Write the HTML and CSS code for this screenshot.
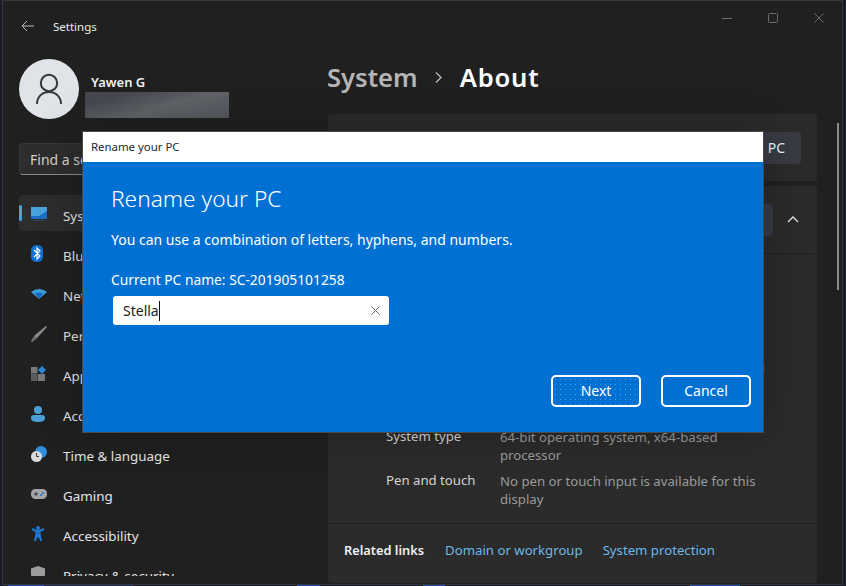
FILE: index.html
```html
<!DOCTYPE html>
<html lang="en">
<head>
    <title>Settings</title>
    <meta charset="UTF-8">
    <meta name="viewport" content="width=device-width, initial-scale=1.0">
    <link rel="stylesheet" href="styles.css">
</head>
<body>
    <div class="window">
        <aside class="sidebar">
            <div class="titlebar">
                <svg class="back" width="13" height="12" viewBox="0 0 13 12"><path d="M6 1 1 6l5 5M1 6h12" fill="none" stroke="#b9bbbd" stroke-width="1"/></svg>
                <span>Settings</span>
            </div>
            <div class="user">
                <div class="avatar">
                    <svg width="28" height="32" viewBox="0 0 28 32"><circle cx="14" cy="10" r="8.2" fill="none" stroke="#33373b" stroke-width="2"/><path d="M2 31c0-7 5-12 12-12s12 5 12 12" fill="none" stroke="#33373b" stroke-width="2"/></svg>
                </div>
                <div class="user-info">
                    <div class="user-name">Yawen G</div>
                    <div class="user-mail"></div>
                </div>
            </div>
            <div class="search">Find a setting</div>
            <nav class="nav">
                <a class="nav-item active">
                    <svg width="16" height="14" viewBox="0 0 16 14"><rect y="0" width="16" height="10" fill="#4aa3dc"/><path d="M16 4v8H0V9h8Z" fill="#1e6ec8"/><rect x="3" y="13" width="10" height="1" fill="#3b4a58"/></svg>
                    <span>System</span>
                </a>
                <a class="nav-item">
                    <svg width="12" height="17" viewBox="0 0 12 17"><rect width="12" height="17" rx="5.500" fill="#0f6fd8"/><path d="M3 5 9 11l-3 3V3l3 3-6 6" fill="none" stroke="#fff" stroke-width="1.200"/></svg>
                    <span>Bluetooth &amp; devices</span>
                </a>
                <a class="nav-item">
                    <svg width="16" height="11" viewBox="0 0 16 11"><path d="M0 4Q8-2 16 4L8 11Z" fill="#3f9fdc"/><path d="M4 5.500Q8 3.500 12 5.500L8 11Z" fill="#1a68c6"/></svg>
                    <span>Network &amp; internet</span>
                </a>
                <a class="nav-item">
                    <svg width="16" height="16" viewBox="0 0 16 16"><path d="M15 0 16 1 6 12 1 16 0 15 4 9Z" fill="#8a8c8e"/><path d="M4 10 6 12 1 16 0 15Z" fill="#6a6c6e"/></svg>
                    <span>Personalization</span>
                </a>
                <a class="nav-item">
                    <svg width="15" height="15" viewBox="0 0 15 15"><rect y="1" width="6.500" height="6.500" fill="#77797b"/><rect y="8" width="6.500" height="7" fill="#5a5c5e"/><rect x="7" y="8" width="7" height="7" fill="#77797b"/><path d="M11 0 15 4 11 8 7 4Z" fill="#2d86d6"/></svg>
                    <span>Apps</span>
                </a>
                <a class="nav-item">
                    <svg width="14" height="16" viewBox="0 0 14 16"><circle cx="7" cy="4" r="4" fill="#4a9fd6"/><path d="M0 12c0-2 1-3 3-3h8c2 0 3 1 3 3 0 3-3 4-7 4s-7-1-7-4Z" fill="#4a9fd6"/></svg>
                    <span>Accounts</span>
                </a>
                <a class="nav-item">
                    <svg width="16" height="16" viewBox="0 0 16 16"><circle cx="10" cy="6" r="6" fill="#2f8ddb"/><circle cx="5.500" cy="10.500" r="5.500" fill="#d8dadc"/><path d="M5.500 7v3.500H8" fill="none" stroke="#33373b" stroke-width="1"/></svg>
                    <span>Time &amp; language</span>
                </a>
                <a class="nav-item">
                    <svg width="16" height="10" viewBox="0 0 16 10"><rect width="16" height="10" rx="4.500" fill="#a2a4a6"/><path d="M3 5h4M5 3v4" stroke="#33373b" stroke-width="1"/><circle cx="10" cy="6" r="1" fill="#1e6ec8"/><circle cx="12" cy="4" r="1" fill="#1e6ec8"/></svg>
                    <span>Gaming</span>
                </a>
                <a class="nav-item">
                    <svg width="14" height="16" viewBox="0 0 14 16"><circle cx="7" cy="2" r="2" fill="#1f78d8"/><path d="M1 3 5 5h4l4-2M6 5 4 15M8 5l2 10M5 7l4 5M9 7l-4 5" fill="none" stroke="#1f78d8" stroke-width="2"/></svg>
                    <span>Accessibility</span>
                </a>
                <a class="nav-item">
                    <svg width="14" height="16" viewBox="0 0 14 16"><path d="M7 0 14 2.500V8c0 4-3 6.500-7 8-4-1.500-7-4-7-8V2.500Z" fill="#9a9c9e"/></svg>
                    <span>Privacy &amp; security</span>
                </a>
            </nav>
        </aside>
        <main class="main">
            <div class="caption">
                <svg width="10" height="1" viewBox="0 0 10 1"><rect width="10" height="1" fill="#6d6d6d"/></svg>
                <svg width="10" height="10" viewBox="0 0 10 10"><rect x=".5" y=".5" width="9" height="9" rx="1" fill="none" stroke="#6d6d6d"/></svg>
                <svg width="10" height="10" viewBox="0 0 10 10"><path d="M.5.500l9 9M9.500.500l-9 9" stroke="#6d6d6d"/></svg>
            </div>
            <h1 class="crumbs">
                <span class="crumb-parent">System</span>
                <svg width="9" height="13" viewBox="0 0 9 13"><path d="M2 1.500 7 6.500l-5 5" fill="none" stroke="#b5b5b5" stroke-width="1.400"/></svg>
                <span class="crumb-current">About</span>
            </h1>
            <div class="scrollbar"></div>
            <section class="card card-top">
                <span class="btn">Rename this PC</span>
            </section>
            <section class="card card-specs">
                <div class="specs-head">
                    <span class="btn btn-copy">Copy</span>
                    <svg width="12" height="7" viewBox="0 0 12 7"><path d="M1 6 6 1l5 5" fill="none" stroke="#e6e6e6" stroke-width="1.300"/></svg>
                </div>
                <div class="specs">
                    <div class="spec spec-tall">
                        <span class="spec-label">Processor</span>
                        <span class="spec-value spec-line">Intel(R) Core(TM) i5-8250U (R)</span>
                    </div>
                    <div class="spec">
                        <span class="spec-label">System type</span>
                        <span class="spec-value">64-bit operating system, x64-based processor</span>
                    </div>
                    <div class="spec">
                        <span class="spec-label">Pen and touch</span>
                        <span class="spec-value">No pen or touch input is available for this display</span>
                    </div>
                </div>
                <div class="related">
                    <strong>Related links</strong>
                    <a>Domain or workgroup</a>
                    <a>System protection</a>
                </div>
            </section>
        </main>
    </div>

    <div class="dialog">
        <div class="dialog-title">Rename your PC</div>
        <div class="dialog-body">
            <h2>Rename your PC</h2>
            <p class="dialog-hint">You can use a combination of letters, hyphens, and numbers.</p>
            <p class="dialog-current">Current PC name: SC-201905101258</p>
            <div class="field">
                <span class="field-text">Stella</span>
                <svg width="9" height="9" viewBox="0 0 9 9"><path d="M.5.500l8 8M8.500.500l-8 8" stroke="#5b6670" stroke-width="1"/></svg>
            </div>
            <div class="dialog-actions">
                <span class="dialog-btn dialog-btn-focus">Next</span>
                <span class="dialog-btn">Cancel</span>
            </div>
        </div>
    </div>
</body>
</html>
```

FILE: styles.css
```css
body {
    margin: 0;
    width: 846px;
    height: 586px;
    overflow: hidden;
    position: relative;
    font-family: "Noto Sans", sans-serif;
    font-size: 14px;
    color: #e4e4e4;
    background:
        linear-gradient(90deg, #1a1c28 0, #1a1c28 8px, #1c4fc0 8px, #1c4fc0 44px, #1a2a5c 44px, #1a2a5c 133px, #181a26 133px, #181a26 297px, #1c4fc0 297px, #1c4fc0 320px, #181a26 320px, #181a26 423px, #1c4fc0 423px, #1c4fc0 445px, #181a26 445px, #181a26 690px, #1c4fc0 690px, #1c4fc0 740px, #181a26 740px) bottom / 100% 2px no-repeat,
        #181a26;
}

.window {
    position: absolute;
    top: 1px;
    left: 3px;
    width: 839px;
    height: 583px;
    display: flex;
    background-color: #202020;
    box-shadow: 0 0 0 1px #34363c;
}

.sidebar {
    width: 325px;
    height: 575px;
    overflow: hidden;
    flex-shrink: 0;
}

.titlebar {
    display: flex;
    align-items: center;
    gap: 19px;
    height: 50px;
    padding-left: 18px;
    font-size: 11.500px;
    color: #ececec;
}

.user {
    display: flex;
    gap: 6px;
    padding: 8px 0 0 16px;
}

.avatar {
    width: 60px;
    height: 60px;
    border-radius: 50%;
    background-color: #e0e3e7;
    display: flex;
    align-items: center;
    justify-content: center;
}

.user-name {
    margin: 13px 0 0 6px;
    font-size: 13px;
    line-height: 20px;
    font-weight: 600;
    color: #f0f0f0;
}

.user-mail {
    width: 144px;
    height: 26px;
    background: linear-gradient(165deg, #45484e 20%, #5f6267 55%, #53565c 100%);
}

.search {
    margin: 24px 0 0 16px;
    width: 290px;
    height: 32px;
    box-sizing: border-box;
    padding-left: 10px;
    line-height: 31px;
    border-radius: 4px;
    background-color: #2d2d2d;
    border: 1px solid #363636;
    border-bottom-color: #8a8a8a;
    color: #cfcfcf;
}

.nav {
    margin: 20px 0 0 16px;
    width: 290px;
}

.nav-item {
    display: flex;
    align-items: center;
    height: 36px;
    margin-bottom: 4px;
    border-radius: 4px;
    position: relative;
    font-size: 13.400px;
    color: #e4e4e4;
}

.nav-item svg {
    margin: 1px 0 0 12px;
}

.nav-item span {
    position: absolute;
    left: 44px;
    top: 11px;
    line-height: 20px;
}

.active {
    background-color: #2d2d2d;
}

.active::before {
    content: "";
    position: absolute;
    left: 0;
    top: 10px;
    width: 3px;
    height: 16px;
    border-radius: 2px;
    background-color: #4aa3dc;
}

.main {
    flex: 1;
    position: relative;
    font-size: 13.200px;
}

.caption {
    position: absolute;
    top: 12px;
    right: 18px;
    display: flex;
    align-items: center;
    gap: 36px;
}

.crumbs {
    display: flex;
    align-items: center;
    gap: 16px;
    height: 40px;
    margin: 56px 0 17px -1px;
    font-size: 25.600px;
    font-weight: 600;
    color: #fff;
}

.crumb-parent {
    color: #b5b5b5;
}

.crumb-current {
    margin-left: 1px;
    letter-spacing: 0.800px;
}

.scrollbar {
    position: absolute;
    top: 122px;
    right: 3px;
    width: 2px;
    height: 167px;
    background-color: #8c8c8c;
}

.card {
    width: 489px;
    box-sizing: border-box;
    border-radius: 4px;
    background-color: #2b2b2b;
}

.card-top {
    height: 67px;
    display: flex;
    align-items: center;
    justify-content: flex-end;
    padding-right: 16px;
    margin-bottom: 5px;
}

.card-specs {
    height: 397px;
}

.btn {
    height: 32px;
    line-height: 31px;
    padding: 0 16px;
    border-radius: 4px;
    background-color: #383b44;
    font-size: 14px;
    color: #f0f0f0;
}

.specs-head {
    height: 67px;
    display: flex;
    align-items: center;
    justify-content: flex-end;
    gap: 14px;
    padding-right: 18px;
    border-bottom: 1px solid #1f1f1f;
}

.specs {
    height: 269px;
    display: flex;
    flex-direction: column;
    justify-content: flex-end;
    padding-bottom: 15px;
    box-sizing: border-box;
    gap: 8px;
}

.spec {
    display: flex;
    padding-left: 58px;
    line-height: 18px;
}

.spec-tall {
    margin-bottom: 44px;
}

.spec-label {
    width: 114px;
    flex-shrink: 0;
    color: #d4d4d4;
    margin-top: -1px;
}

.spec-value {
    width: 262px;
    color: #9a9a9a;
}

.spec-line {
    width: 265px;
    text-align: right;
    color: #6f6f6f;
}

.related {
    display: flex;
    align-items: center;
    gap: 20px;
    height: 52px;
    padding-left: 16px;
    border-top: 1px solid #1f1f1f;
}

.related strong {
    margin-right: 1px;
    font-size: 12.800px;
    font-weight: 600;
    color: #f0f0f0;
}

.related a {
    color: #6cb8e6;
}

.dialog {
    position: absolute;
    top: 131px;
    left: 82px;
    width: 682px;
    height: 302px;
    box-sizing: border-box;
    border: 1px solid #4a4a4a;
    background-color: #0170d3;
    color: #fff;
    box-shadow: 0 0 40px rgba(0, 0, 0, 0.25);
}

.dialog-title {
    height: 30px;
    line-height: 29px;
    padding-left: 8px;
    font-size: 11.400px;
    color: #1c2733;
    background-color: #fff;
}

.dialog-body {
    padding: 21px 12px 0 28px;
}

.dialog-body h2 {
    margin: 0;
    font-size: 22.700px;
    line-height: 32px;
    font-weight: 300;
}

.dialog-hint {
    margin: 15px 0 0;
    line-height: 20px;
}

.dialog-current {
    margin: 20px 0 0;
    font-size: 13.800px;
    line-height: 20px;
}

.field {
    display: flex;
    align-items: center;
    justify-content: space-between;
    width: 276px;
    height: 29px;
    box-sizing: border-box;
    margin: 6px 0 0 2px;
    padding: 0 9px 0 10px;
    border-radius: 3px;
    background-color: #fff;
    color: #222;
}

.field-text {
    border-right: 1px solid #111;
    line-height: 20px;
}

.dialog-actions {
    display: flex;
    justify-content: flex-end;
    gap: 20px;
    margin-top: 50px;
}

.dialog-btn {
    width: 90px;
    height: 32px;
    box-sizing: border-box;
    border: 2px solid #fff;
    border-radius: 5px;
    text-align: center;
    line-height: 28px;
}

.dialog-btn-focus {
    background-image: radial-gradient(#4f9fe2 0.5px, transparent 0.7px);
    background-size: 5px 5px;
}
```
